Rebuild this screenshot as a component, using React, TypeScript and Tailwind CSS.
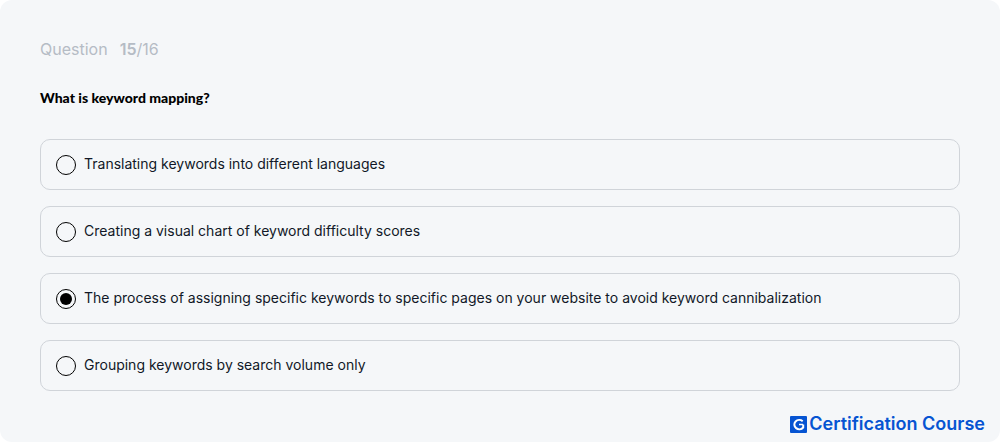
import { useState } from "react";

const options = [
  "Translating keywords into different languages",
  "Creating a visual chart of keyword difficulty scores",
  "The process of assigning specific keywords to specific pages on your website to avoid keyword cannibalization",
  "Grouping keywords by search volume only",
];

const Brand = () => (
  <div className="flex items-center justify-end gap-0.5 text-[#0654d2]">
    <svg viewBox="0 0 17 17" className="size-[17px]" aria-hidden="true">
      <rect width="17" height="17" rx="1" fill="currentColor" />
      <path
        d="M12.700 5.200A5 4.600 0 1 0 13.200 11.500V8.500"
        fill="none"
        stroke="white"
        strokeWidth="2"
      />
      <path d="M9 8.500H13" fill="none" stroke="white" strokeWidth="1.5" />
    </svg>
    <span className="font-['Inter',sans-serif] text-lg leading-5 font-semibold">
      Certification Course
    </span>
  </div>
);

const App = () => {
  const [selected, setSelected] = useState(2);

  return (
    <main className="rounded-xl bg-[#f5f7f9] px-10 pt-[39px] pb-2 font-['Inter',sans-serif]">
      <p className="flex gap-3 text-base leading-5 text-[#b5bcc5]">
        <span>Question</span>
        <span>
          <span className="font-semibold">15</span>/16
        </span>
      </p>
      <fieldset>
        <legend className="pt-[29px] pb-[31px] font-['Lato',sans-serif] text-sm leading-5 font-black text-black">
          What is keyword mapping?
        </legend>
        <div className="flex flex-col gap-4">
          {options.map((option, index) => (
            <label
              key={option}
              className="flex min-h-[51px] cursor-pointer items-center gap-2 rounded-[10px] border border-[#d0d4d9] px-[15px] text-sm leading-5 text-[#111827]"
            >
              <input
                type="radio"
                name="answer"
                checked={selected === index}
                onChange={() => setSelected(index)}
                className="size-5 shrink-0 appearance-none rounded-full border border-black bg-clip-content p-[3px] checked:bg-black"
              />
              <span className="pb-0.5">{option}</span>
            </label>
          ))}
        </div>
      </fieldset>
      <div className="-mr-[25px] pt-[23px]">
        <Brand />
      </div>
    </main>
  );
};

export default App;
